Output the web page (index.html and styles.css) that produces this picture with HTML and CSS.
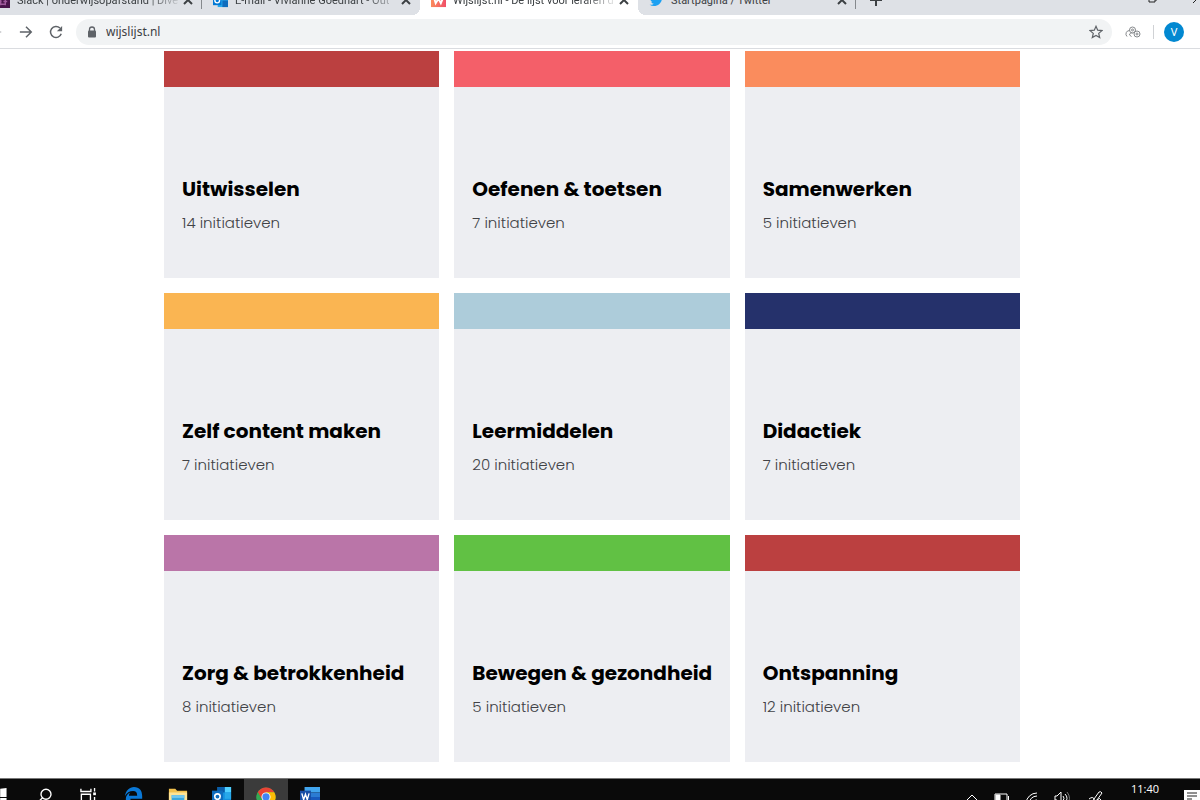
FILE: index.html
```html
<!DOCTYPE html>
<html lang="nl">
<head>
    <meta charset="UTF-8">
    <meta name="viewport" content="width=device-width, initial-scale=1.0">
    <title>Wijslijst.nl - De lijst voor leraren</title>
    <link rel="stylesheet" href="styles.css">
</head>
<body>
    <!-- browser tabs -->
    <header class="tabs">
        <div class="tab line">
            <svg class="favicon" viewBox="0 0 16 16"><rect width="16" height="16" fill="#4a154b"/><path d="M3 9h4M9 9h4M5 12h6M6 6v7M11 6v7" stroke="#a05a9c" stroke-width="1.5"/></svg>
            <span class="tab-title fade">Slack | onderwijsopafstand | Dive</span>
            <button class="tab-close" aria-label="Tabblad sluiten"><svg viewBox="0 0 10 10"><path d="M1 1l8 8M9 1l-8 8"/></svg></button>
        </div>
        <div class="tab">
            <svg class="favicon" viewBox="0 0 16 16"><rect x="5" width="11" height="15" fill="#28a8ea"/><path d="M10 8h6v7h-6z" fill="#0f6cbd"/><rect y="3" width="9" height="10" fill="#0078d4"/><circle cx="4.500" cy="8" r="2.500" fill="none" stroke="#fff" stroke-width="1.500"/></svg>
            <span class="tab-title fade">E-mail - Vivianne Goedhart - Out</span>
            <button class="tab-close" aria-label="Tabblad sluiten"><svg viewBox="0 0 10 10"><path d="M1 1l8 8M9 1l-8 8"/></svg></button>
        </div>
        <div class="tab active">
            <svg class="favicon" viewBox="0 0 16 16"><defs><linearGradient id="wl"><stop stop-color="#fb8b5c"/><stop offset="1" stop-color="#f04f68"/></linearGradient></defs><rect width="16" height="15" fill="url(#wl)"/><path d="M3.500 6l1.500 5 3-5 2.500 5 2-5" fill="none" stroke="#fff" stroke-width="2"/></svg>
            <span class="tab-title fade">Wijslijst.nl - De lijst voor leraren d</span>
            <button class="tab-close" aria-label="Tabblad sluiten"><svg viewBox="0 0 10 10"><path d="M1 1l8 8M9 1l-8 8"/></svg></button>
        </div>
        <div class="tab line">
            <svg class="favicon" viewBox="0 0 24 24"><path fill="#1da1f2" d="M23 5c-.8.4-1.700.6-2.600.7.9-.5 1.600-1.400 2-2.400-.9.5-1.900.9-2.900 1.100A4.500 4.500 0 0 0 11.800 8.500C8 8.300 4.700 6.500 2.500 3.800a4.500 4.500 0 0 0 1.400 6c-.7 0-1.400-.2-2-.5 0 2.200 1.500 4.100 3.600 4.500-.7.2-1.400.2-2 .1.600 1.800 2.200 3.100 4.200 3.100A9.100 9.100 0 0 1 1 18.900c2 1.300 4.400 2 6.900 2 8.400 0 13.200-7.100 12.900-13.500.9-.7 1.600-1.500 2.200-2.400z"/></svg>
            <span class="tab-title">Startpagina / Twitter</span>
            <button class="tab-close" aria-label="Tabblad sluiten"><svg viewBox="0 0 10 10"><path d="M1 1l8 8M9 1l-8 8"/></svg></button>
        </div>
        <button class="new-tab" aria-label="Nieuw tabblad"><svg viewBox="0 0 12 12"><path d="M6 0v12M0 6h12"/></svg></button>
        <div class="window">
            <button aria-label="Verkleinen"><svg viewBox="0 0 10 10"><path d="M1 3h6v6h-6zM3 3V1h6v6H7"/></svg></button>
            <button aria-label="Sluiten"><svg viewBox="0 0 10 10"><path d="M0 0l10 10M10 0L0 10"/></svg></button>
        </div>
    </header>

    <nav class="toolbar">
        <button class="nav-btn" aria-label="Vorige"><svg class="faded" viewBox="0 0 16 16"><path d="M14 8H3M8 3L3 8l5 5"/></svg></button>
        <button class="nav-btn" aria-label="Volgende"><svg viewBox="0 0 16 16"><path d="M1 8h13M8 2l6 6-6 6"/></svg></button>
        <button class="nav-btn" aria-label="Vernieuwen"><svg viewBox="0 0 16 16"><path d="M14 10A6.300 6.300 0 1 1 12.500 3.500"/><path d="M15 1v6H9z" class="solid"/></svg></button>
        <div class="address">
            <svg class="lock" viewBox="0 0 10 12"><path d="M2.500 5V3.500a2.500 2.500 0 0 1 5 0V5" fill="none" stroke="#5f6368" stroke-width="1.300"/><rect x="1" y="4.500" width="8" height="7" rx="1" fill="#5f6368"/></svg>
            <input type="text" value="wijslijst.nl" aria-label="Adres">
            <button aria-label="Bladwijzer"><svg class="star" viewBox="0 0 14 14"><path d="M7 1.300l1.700 3.900 4.200.4-3.200 2.800 1 4.200L7 10.400l-3.700 2.200 1-4.200L1.100 5.600l4.200-.4z"/></svg></button>
        </div>
        <button class="ext" aria-label="Extensie"><svg viewBox="0 0 16 12"><circle cx="7.500" cy="4" r="3"/><circle cx="7.500" cy="4" r="1"/><circle cx="12" cy="8" r="3"/><circle cx="12" cy="8" r="1"/><path d="M4.500 4.500A3.500 3.500 0 0 0 2 10.500M7.500 7a2.200 2.200 0 0 0-3 2l2 1.500"/></svg></button>
        <span class="divider"></span>
        <button class="avatar">V</button>
    </nav>

    <main>
        <div class="grid">
            <a href="#" class="card red">
                <h2>Uitwisselen</h2>
                <p>14 initiatieven</p>
            </a>
            <a href="#" class="card pink">
                <h2>Oefenen &amp; toetsen</h2>
                <p>7 initiatieven</p>
            </a>
            <a href="#" class="card orange">
                <h2>Samenwerken</h2>
                <p>5 initiatieven</p>
            </a>
            <a href="#" class="card yellow">
                <h2>Zelf content maken</h2>
                <p>7 initiatieven</p>
            </a>
            <a href="#" class="card lightblue">
                <h2>Leermiddelen</h2>
                <p>20 initiatieven</p>
            </a>
            <a href="#" class="card navy">
                <h2>Didactiek</h2>
                <p>7 initiatieven</p>
            </a>
            <a href="#" class="card purple">
                <h2>Zorg &amp; betrokkenheid</h2>
                <p>8 initiatieven</p>
            </a>
            <a href="#" class="card green">
                <h2>Bewegen &amp; gezondheid</h2>
                <p>5 initiatieven</p>
            </a>
            <a href="#" class="card red">
                <h2>Ontspanning</h2>
                <p>12 initiatieven</p>
            </a>
        </div>
    </main>

    <!-- windows taskbar -->
    <footer class="taskbar">
        <div class="apps">
            <button aria-label="Start"><svg viewBox="0 0 22 22"><path fill="#fff" d="M0 3l8-1v9H0zM9 2l7-1v10H9zM0 12h8v8l-8-1zM9 12h7v9l-7-1z"/></svg></button>
            <button aria-label="Zoeken"><svg viewBox="0 0 22 22"><path d="M7.500 11.500L3 16" stroke="#fff" stroke-width="1.500"/><circle cx="11" cy="8" r="5.500" fill="none" stroke="#fff" stroke-width="1.500"/></svg></button>
            <button aria-label="Taakweergave"><svg viewBox="0 0 22 22"><path d="M1 2v3h11V2M1.500 8h10v7h-10zM1 20v-2h11v2M16 1v4M16 11v9" fill="none" stroke="#fff" stroke-width="1.500"/><path d="M14.500 6h3v3h-3z" fill="#fff"/></svg></button>
            <button aria-label="Edge"><svg viewBox="0 0 22 22"><path fill="#0a78d6" d="M1 10C2 4 6 0 11 0c6 0 9 4 9 10v3H7c0 4 6 5 11 2v4C10 24 2 20 2 13c0-3 2-6 5-7-1 1-1.500 2-1.500 3.500h9C14.500 6 13 4.500 10 4.500 6 4.500 3 6.500 1 10z"/></svg></button>
            <button aria-label="Verkenner"><svg viewBox="0 0 22 22"><path fill="#f2c14e" d="M1 2h7l2 2h11v16H1z"/><path fill="#ffe394" d="M1 6h20v14H1z"/><path fill="#39a6dd" d="M4 9h14v11H4z"/><path fill="#72c7ee" d="M4 9h14v3H4z"/></svg></button>
            <button aria-label="Outlook"><svg viewBox="0 0 22 22"><path fill="#1490df" d="M6 0h15v20H6z"/><path fill="#50d0ff" d="M14 0h7v6h-7z"/><path fill="#28a8ea" d="M14 6h7v7h-7z"/><path fill="#0a5ca8" d="M6 0h8v6H6z"/><rect y="4" width="12" height="13" fill="#0f6cbd"/><circle cx="6" cy="10.500" r="3" fill="none" stroke="#fff" stroke-width="1.800"/></svg></button>
            <button class="current" aria-label="Chrome"><svg viewBox="0 0 22 22"><circle cx="11" cy="11" r="10.500" fill="#34a853"/><path fill="#ea4335" d="M1.900 5.700A10.500 10.500 0 0 1 20.100 5.700H11L6.500 13.500z"/><path fill="#fbbc05" d="M20.100 5.700A10.500 10.500 0 0 1 11 21.500l4.500-8L11 5.700z"/><path fill="#34a853" d="M1.900 5.700L6.400 13.500 11 16l-.5 5.500A10.500 10.500 0 0 1 1.900 5.700z"/><circle cx="11" cy="11" r="5" fill="#fff"/><circle cx="11" cy="11" r="4" fill="#4285f4"/></svg></button>
            <button aria-label="Word"><svg viewBox="0 0 22 22"><path fill="#41a5ee" d="M5 0h17v6H5z"/><path fill="#2b7cd3" d="M5 6h17v5H5z"/><path fill="#185abd" d="M5 11h17v10H5z"/><rect y="4" width="12" height="13" fill="#174ea6"/><path d="M2 7l2 7 2-6 2 6 2-7" fill="none" stroke="#fff" stroke-width="1.500"/></svg></button>
        </div>
        <div class="tray">
            <svg viewBox="0 0 16 16"><path d="M2 10l6-6 6 6"/></svg>
            <svg viewBox="0 0 16 16"><path d="M1 3h12v9H1zM14.500 5v4"/><path class="solid" d="M2 4h4v7H2z"/></svg>
            <svg viewBox="0 0 16 16"><path d="M2 12A11 11 0 0 1 13 2M5 13a8 8 0 0 1 8-8M8 14a5 5 0 0 1 5-5"/></svg>
            <svg viewBox="0 0 16 16"><path d="M1 5h2l4-4v12l-4-4H1zM9 5q2 2 0 5M11 3q4 4 0 9"/><path class="dim" d="M13 1q5 6 0 13"/></svg>
            <svg class="pen" viewBox="0 0 16 16"><path d="M6 8l5-7q2-1 3 1l-5 7-4 2zM1 8q4-3 5 0t-3 5M9 9q3-3 4 0t2 0"/></svg>
            <time>11:40</time>
            <svg class="notes" viewBox="0 0 16 16"><path fill="#fff" d="M0 1h16v13H8l-3 3v-3H0z"/><path d="M3 4h10M3 7h10M3 10h5" stroke="#222"/></svg>
        </div>
    </footer>
</body>
</html>
```
FILE: styles.css
```css
*{
    margin: 0;
    padding: 0;
    box-sizing: border-box;
}
body{
    display: flex;
    flex-direction: column;
    height: 100vh;
    overflow: hidden;
    background: #fff;
    font-family: "Noto Sans", sans-serif;
    font-size: 12px;
    color: #3c4043;
}
button{
    border: 0;
    background: none;
    font: inherit;
}
svg{
    display: block;
    flex: none;
}

/* tabs */
.tabs{
    display: flex;
    align-items: flex-end;
    flex: none;
    height: 15px;
    padding-right: 8px;
    background: #dee1e6;
    overflow: hidden;
}
.tab{
    position: relative;
    display: flex;
    align-items: center;
    flex: none;
    width: 218px;
    height: 30px;
    padding: 0 9px 0 11px;
}
.tab:first-child{
    margin-left: -16px;
}
.tab.line::after{
    content: "";
    position: absolute;
    right: 0;
    bottom: 6px;
    width: 1px;
    height: 20px;
    background: #85898d;
}
.tab.active{
    background: #fff;
}
.tab.active::before,
.tab.active::after{
    content: "";
    position: absolute;
    bottom: 0;
    width: 8px;
    height: 8px;
}
.tab.active::before{
    left: -8px;
    background: radial-gradient(circle at 0 0, transparent 8px, #fff 8px);
}
.tab.active::after{
    right: -8px;
    background: radial-gradient(circle at 100% 0, transparent 8px, #fff 8px);
}
.favicon{
    width: 15px;
    height: 15px;
    margin-right: 7px;
}
.tab-title{
    flex: 1;
    font-family: Roboto, sans-serif;
    font-size: 11px;
    white-space: nowrap;
}
.fade{
    -webkit-mask-image: linear-gradient(to right, #000 130px, transparent 166px);
    mask-image: linear-gradient(to right, #000 130px, transparent 166px);
}
.tab-close svg,
.new-tab svg,
.window svg{
    width: 10px;
    height: 10px;
    fill: none;
    stroke: #3c4043;
    stroke-width: 2;
}
.new-tab{
    display: flex;
    align-items: center;
    justify-content: center;
    width: 40px;
    height: 30px;
}
.new-tab svg{
    width: 12px;
    height: 12px;
}
.window{
    display: flex;
    margin-left: auto;
    margin-right: -28px;
}
.window button{
    display: flex;
    align-items: center;
    justify-content: center;
    width: 45px;
    height: 34px;
}
.window svg{
    stroke: #222;
    stroke-width: 1;
}

/* toolbar */
.toolbar{
    display: flex;
    align-items: center;
    flex: none;
    height: 34px;
    padding-right: 16px;
    border-bottom: 1px solid #dadce0;
}
.nav-btn{
    width: 30px;
    display: flex;
    justify-content: center;
}
.nav-btn:first-child{
    margin-left: -19px;
}
.nav-btn svg{
    width: 14px;
    height: 14px;
    fill: none;
    stroke: #5f6368;
    stroke-width: 1.7;
}
.nav-btn .faded{
    stroke: #c3c5c8;
}
.nav-btn .solid{
    fill: #5f6368;
    stroke: none;
}
.address{
    display: flex;
    align-items: center;
    flex: 1;
    height: 26px;
    margin-left: 5px;
    padding: 0 9px 0 11px;
    border-radius: 13px;
    background: #f1f3f4;
}
.lock{
    width: 10px;
    height: 12px;
    margin-right: 9px;
}
.address input{
    flex: 1;
    border: 0;
    outline: 0;
    background: none;
    font: inherit;
    color: #3c4043;
}
.star{
    width: 14px;
    height: 14px;
    fill: none;
    stroke: #5f6368;
    stroke-width: 1.2;
}
.ext{
    margin-left: 13px;
}
.ext svg{
    width: 16px;
    height: 12px;
    fill: none;
    stroke: #85888b;
}
.divider{
    width: 1px;
    height: 14px;
    margin: 0 10px 0 12px;
    background: #d0d2d5;
}
.avatar{
    width: 20px;
    height: 20px;
    border-radius: 50%;
    background: #0288d1;
    color: #fff;
    font-size: 11px;
}

/* cards */
main{
    flex: 1;
    padding: 2px 16px 16px 0;
    overflow: hidden;
}
.grid{
    display: grid;
    grid-template-columns: repeat(3, minmax(0, 1fr));
    gap: 15px;
    max-width: 856px;
    margin: 0 auto;
}
.card{
    min-height: 227px;
    padding: 84px 18px 39px;
    border-top: 36px solid #bb4040;
    background: #edeef2;
    font-family: Poppins, sans-serif;
    color: #414246;
    text-decoration: none;
}
.card h2{
    font-size: 20px;
    font-weight: 700;
    line-height: 36px;
    color: #000;
    white-space: nowrap;
}
.card p{
    font-size: 15px;
    font-weight: 300;
    line-height: 32px;
}
.card.pink{
    border-color: #f45f69;
}
.card.orange{
    border-color: #fa8c5d;
}
.card.yellow{
    border-color: #fab552;
}
.card.lightblue{
    border-color: #adccda;
}
.card.navy{
    border-color: #25316b;
}
.card.purple{
    border-color: #ba75a8;
}
.card.green{
    border-color: #61c144;
}

/* taskbar */
.taskbar{
    display: flex;
    justify-content: space-between;
    flex: none;
    height: 22px;
    border-top: 1px solid #777;
    background: #0a0a0a;
    overflow: hidden;
}
.apps{
    display: flex;
    margin-left: -20px;
}
.apps button{
    display: flex;
    align-items: center;
    justify-content: center;
    width: 44px;
    height: 36px;
}
.apps svg{
    width: 20px;
    height: 20px;
}
.apps .current{
    background: #3b3b3b;
}
.tray{
    display: flex;
    align-items: flex-start;
    gap: 14px;
}
.tray svg{
    width: 16px;
    height: 16px;
    margin-top: 12px;
    fill: none;
    stroke: #fff;
}
.tray .solid{
    fill: #fff;
}
.tray .dim{
    stroke: #777;
}
.tray .pen{
    margin-left: 4px;
}
.tray time{
    margin: 0 11px 0 13px;
    font-family: "Open Sans", sans-serif;
    font-size: 11px;
    line-height: 20px;
    color: #fff;
}
.tray .notes{
    margin-top: 10px;
    stroke: none;
}
```
